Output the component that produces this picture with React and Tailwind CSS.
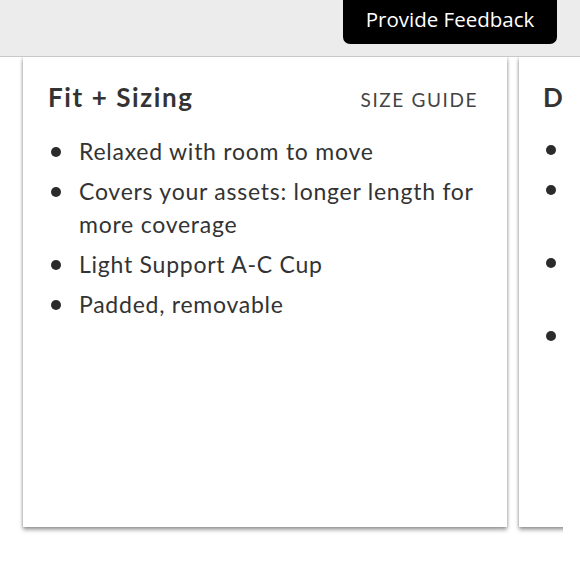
import React from "react";

const card1 = [
  ["Relaxed with room to move"],
  ["Covers your assets: longer length for", "more coverage"],
  ["Light Support A-C Cup"],
  ["Padded, removable"],
];

const card2 = [
  ["Soft, smooth fabric"],
  ["Moisture-wicking and quick-drying", "for all-day comfort"],
  ["Four-way stretch keeps its shape", "wash after wash"],
  ["Imported"],
];

function Card({ title, action, items, pl }) {
  return (
    <div className={`shrink-0 w-[484px] h-[470px] bg-white shadow-[0_3px_4px_rgba(0,0,0,0.35),0_0_3px_rgba(0,0,0,0.25)] pr-[29px] pt-[24px] ${pl}`}>
      <div className="flex items-baseline justify-between">
        <div className="text-[26px] font-bold text-[#333] leading-[32px] tracking-[1.6px]">{title}</div>
        {action && (
          <div className="text-[19px] text-[#444] tracking-[1.6px] leading-[30px]">{action}</div>
        )}
      </div>
      <ul className="mt-[20px] flex flex-col gap-[7px]">
        {items.map((lines, i) => (
          <li key={i} className="flex text-[23px] tracking-[0.75px] leading-[33px] text-[#333] whitespace-nowrap">
            <span className="w-[31px] shrink-0 flex pt-[12px] pl-[3px]">
              <span className="w-[10px] h-[10px] rounded-full bg-[#2b2b2b]" />
            </span>
            <span>
              {lines.map((l, j) => (
                <div key={j}>{l}</div>
              ))}
            </span>
          </li>
        ))}
      </ul>
    </div>
  );
}

export default function App() {
  return (
    <div className="w-[580px] h-[580px] bg-white overflow-hidden relative" style={{ fontFamily: "Lato, 'Open Sans', sans-serif" }}>
      <div className="absolute left-0 top-[57px] w-[563px] h-[500px] overflow-hidden">
        <div className="flex gap-[12px] pl-[23px]">
          <Card title="Fit + Sizing" action="SIZE GUIDE" items={card1} pl="pl-[25px]" />
          <Card title="Details" items={card2} pl="pl-[24px]" />
        </div>
      </div>
      <div className="relative h-[57px] bg-[#ececec] border-b border-[#c9c9c9] flex justify-end pr-[23px]">
        <div
          className="h-[44px] w-[214px] bg-black rounded-b-[7px] flex items-center justify-center text-white text-[20.5px] pb-[5px]"
          style={{ fontFamily: "'Open Sans', sans-serif" }}
        >
          Provide Feedback
        </div>
      </div>
    </div>
  );
}
